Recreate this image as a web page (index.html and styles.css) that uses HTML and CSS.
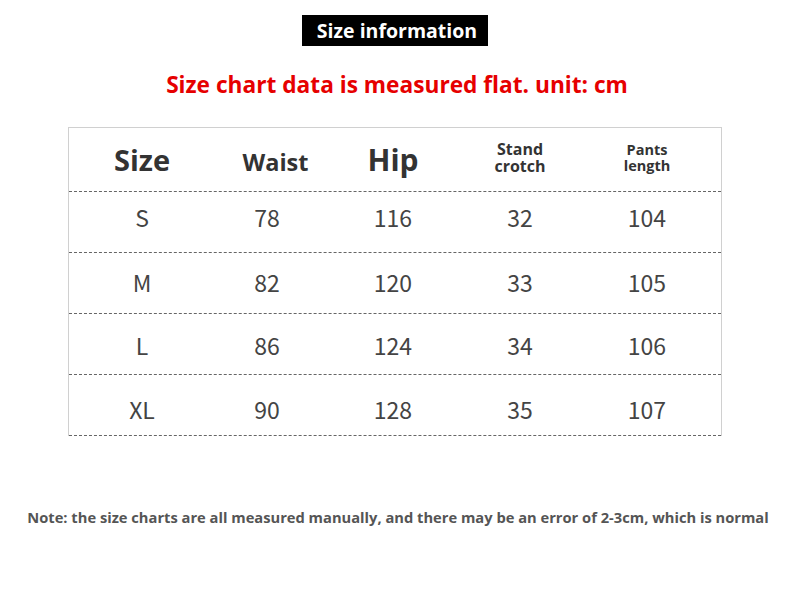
FILE: index.html
```html
<!DOCTYPE html>
<html>
<head>
<meta charset="utf-8">
<link rel="stylesheet" href="styles.css">
</head>
<body>
<div class="page">
  <div class="title-wrap"><div class="title">Size information</div></div>
  <div class="subtitle">Size chart data is measured flat. unit: cm</div>
  <div class="table">
    <div class="row head">
      <div class="cell h-size">Size</div>
      <div class="cell h-waist">Waist</div>
      <div class="cell h-hip">Hip</div>
      <div class="cell h-stand">Stand<br>crotch</div>
      <div class="cell h-pants">Pants<br>length</div>
    </div>
    <div class="row r1">
      <div class="cell">S</div><div class="cell">78</div><div class="cell">116</div><div class="cell">32</div><div class="cell">104</div>
    </div>
    <div class="row r2">
      <div class="cell">M</div><div class="cell">82</div><div class="cell">120</div><div class="cell">33</div><div class="cell">105</div>
    </div>
    <div class="row r3">
      <div class="cell">L</div><div class="cell">86</div><div class="cell">124</div><div class="cell">34</div><div class="cell">106</div>
    </div>
    <div class="row r4">
      <div class="cell">XL</div><div class="cell">90</div><div class="cell">128</div><div class="cell">35</div><div class="cell">107</div>
    </div>
  </div>
  <div class="note">Note: the size charts are all measured manually, and there may be an error of 2-3cm, which is normal</div>
</div>
</body>
</html>
```
FILE: styles.css
```css
html, body {
  margin: 0;
  padding: 0;
  background: #fff;
}
.page {
  width: 790px;
  height: 612px;
  display: flex;
  flex-direction: column;
  align-items: center;
  font-family: "Open Sans", "Noto Sans", sans-serif;
}
.title-wrap {
  margin-top: 15px;
  display: flex;
  justify-content: center;
  width: 100%;
}
.title {
  background: #000;
  color: #fff;
  font-weight: 700;
  font-size: 19.5px;
  height: 31px;
  line-height: 31px;
  width: 186px;
  text-align: center;
  padding-left: 4px;
  box-sizing: border-box;
}
.subtitle {
  margin-top: 24px;
  color: #e60000;
  font-weight: 700;
  font-size: 22.7px;
  line-height: 30px;
  height: 30px;
  text-align: center;
  padding-left: 4px;
}
.table {
  margin-top: 27px;
  width: 652px;
  border: 1px solid #d0d0d0;
  border-bottom: none;
  align-self: flex-start;
  margin-left: 68px;
}
.row {
  display: grid;
  grid-template-columns: 146px 104px 148px 106px 148px;
  height: 60px;
  border-bottom: 1px dashed #666;
  align-items: center;
}
.row.head {
  height: 63px;
}
.cell {
  text-align: center;
  font-family: "Noto Sans CJK SC", "Noto Sans", sans-serif;
  font-weight: 400;
  font-size: 23px;
  color: #444;
  line-height: 1;
}
.r1 .cell { padding-bottom: 9px; }
.r2 .cell { padding-bottom: 1px; }
.r3 .cell { padding-top: 2px; }
.r4 .cell { padding-top: 9px; }
.head .cell {
  font-family: "Open Sans", "Noto Sans", sans-serif;
  font-weight: 700;
  color: #333;
}
.h-size { font-size: 29px; }
.h-waist { font-size: 23.5px; padding-top: 6px; padding-left: 17px; }
.h-hip { font-size: 30px; }
.h-stand { font-size: 16px; line-height: 17px; padding-bottom: 4px; }
.h-pants { font-size: 14.5px; line-height: 16px; padding-bottom: 4px; }
.note {
  margin-top: 71px;
  color: #555;
  font-weight: 700;
  font-size: 14.7px;
  line-height: 20px;
  text-align: center;
  white-space: nowrap;
  padding-left: 6px;
}
```
